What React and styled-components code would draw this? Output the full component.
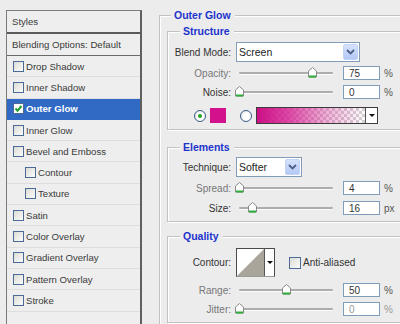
import React from "react";
import styled, { createGlobalStyle } from "styled-components";

const GlobalStyle = createGlobalStyle`
  html, body {
    margin: 0;
    padding: 0;
    background: #ececec;
    overflow: hidden;
  }
  body {
    font-family: "Liberation Sans", Arial, sans-serif;
    font-size: 10px;
    color: #333;
  }
  * { box-sizing: border-box; }
`;

const Window = styled.div`
  display: flex;
  width: 400px;
  height: 324px;
  overflow: hidden;
  background: #ececec;
`;

/* ---------- left list ---------- */

const StylesPanel = styled.div`
  flex: 0 0 136px;
  margin: 10px 0 0 6px;
  border: 1px solid #7c7c7c;
  border-right: 2px solid #5f5f5f;
  border-bottom: none;
  background: #eeeeee;
  display: flex;
  flex-direction: column;
  font-size: 9.6px;
`;

const PanelHead = styled.div`
  height: ${p => (p.$strong ? 23 : 22)}px;
  display: flex;
  align-items: center;
  padding-left: 5px;
  color: #3a3a3a;
  border-bottom: ${p => (p.$strong ? "2px solid #5a5a5a" : "1px solid #6a6a6a")};
`;

const StyleRow = styled.div`
  height: 21.3px;
  display: flex;
  align-items: center;
  gap: 2px;
  padding-left: ${p => (p.$indent ? 18 : 6)}px;
  border-bottom: 1px solid ${p => (p.$active ? "#316ac5" : "#dedede")};
  background: ${p => (p.$active ? "#316ac5" : "transparent")};
  color: ${p => (p.$active ? "#fff" : "#3a3a3a")};
  font-weight: ${p => (p.$active ? "bold" : "normal")};
`;

const Check = styled.span`
  width: ${p => p.$size || 11}px;
  height: ${p => p.$size || 11}px;
  flex: 0 0 auto;
  display: inline-flex;
  align-items: center;
  justify-content: center;
  border: 1px solid #4b6a96;
  background: ${p => (p.$on ? "#fff" : "linear-gradient(135deg, #dcdcd6, #fbfbfb)")};
`;

/* ---------- right side ---------- */

const SettingsPane = styled.div`
  flex: 1;
  min-width: 0;
  overflow: hidden;
  padding-left: 17px;
`;

const Group = styled.fieldset`
  width: ${p => p.$w}px;
  margin: ${p => p.$mt}px 0 0 0;
  padding: ${p => p.$pt}px 0 ${p => p.$pb}px ${p => p.$pl}px;
  border: 1px solid #c2c2c2;
  box-shadow: inset 1px 1px 0 #ffffff, 1px 1px 0 #ffffff;
  min-inline-size: 0;
`;

const Title = styled.legend`
  margin-left: ${p => p.$ml}px;
  padding: 0 4px 0 3px;
  line-height: 12px;
  font-weight: bold;
  font-size: 10.5px;
  color: #1c33cc;
  background: #ececec;
`;

const Row = styled.div`
  display: flex;
  align-items: center;
  height: ${p => p.$h}px;
  margin-top: ${p => p.$mt || 0}px;
`;

const Label = styled.span`
  width: 60px;
  margin-right: 5px;
  text-align: right;
  white-space: nowrap;
  color: ${p => (p.$dim ? "#777" : "#333")};
`;

const Select = styled.div`
  width: ${p => p.$w}px;
  height: 100%;
  display: flex;
  align-items: center;
  border: 1px solid #7f9db9;
  background: #fff;
  padding: 1px 1px 1px 2px;
  font-size: 10.5px;
  color: #222;
`;

const SelectText = styled.span`
  flex: 1;
`;

const SelectButton = styled.span`
  width: 15px;
  height: 100%;
  display: flex;
  align-items: center;
  justify-content: center;
  border-radius: 2px;
  background: linear-gradient(180deg, #d6e2fd, #b4c8f6);
  border: 1px solid #c2d3f8;
`;

const SliderBox = styled.div`
  position: relative;
  width: 100px;
  height: 100%;
  display: flex;
  align-items: center;
  padding: 0 3px;
  margin-right: 7px;
`;

const Track = styled.div`
  flex: 1;
  height: 2px;
  border-radius: 1px;
  background: #adadad;
  box-shadow: 0 1px 0 #fbfbfb;
`;

const Thumb = styled.svg`
  position: absolute;
  top: 1px;
`;

const NumberBox = styled.div`
  width: 37px;
  height: 100%;
  border: 1px solid #7f9db9;
  background: #fff;
  padding-left: 5px;
  display: flex;
  align-items: center;
  color: ${p => (p.$dim ? "#999" : "#333")};
`;

const Unit = styled.span`
  margin-left: 4px;
  color: ${p => (p.$dim ? "#999" : "#555")};
`;

const Radio = styled.span`
  position: relative;
  width: 12px;
  height: 12px;
  flex: 0 0 auto;
  margin-left: ${p => p.$ml}px;
  border-radius: 50%;
  border: 1px solid #365a89;
  background: radial-gradient(circle at 60% 60%, #ffffff 40%, #dcdcd8);
  &::after {
    content: "";
    display: ${p => (p.$on ? "block" : "none")};
    position: absolute;
    left: 3px;
    top: 3px;
    width: 4px;
    height: 4px;
    border-radius: 50%;
    background: #22a522;
  }
`;

const Swatch = styled.span`
  width: 16px;
  height: 15px;
  margin-left: 4px;
  background: #d3118c;
`;

const GradientPicker = styled.div`
  width: 122px;
  height: 100%;
  margin-left: 4px;
  display: flex;
  border: 1px solid #3c3c3c;
`;

const Ramp = styled.div`
  flex: 1;
  background:
    linear-gradient(90deg, #cc0f86 0%, rgba(214, 30, 145, 0.8) 30%, rgba(220, 60, 160, 0.4) 65%, rgba(230, 120, 190, 0) 100%),
    repeating-conic-gradient(#d2d2d2 0 25%, #ffffff 0 50%) 0 0 / 6px 6px;
`;

const DropBox = styled.div`
  width: ${p => p.$w}px;
  display: flex;
  align-items: center;
  justify-content: center;
  background: #fff;
  border-left: 1px solid #555;
`;

const Caret = styled.span`
  width: 0;
  height: 0;
  border-left: 3px solid transparent;
  border-right: 3px solid transparent;
  border-top: 3px solid #111;
`;

const ContourPicker = styled.div`
  width: 39px;
  height: 100%;
  display: flex;
  border: 1px solid #4a4a4a;
  border-bottom-color: #9a9a9a;
  background: #fff;
`;

const ContourCurve = styled.svg`
  flex: 1;
  height: 100%;
  display: block;
`;

const CheckLabel = styled.span`
  margin-left: 2px;
  color: #333;
`;

const lists = [
  { name: "Drop Shadow" },
  { name: "Inner Shadow" },
  { name: "Outer Glow", active: true },
  { name: "Inner Glow" },
  { name: "Bevel and Emboss" },
  { name: "Contour", indent: true },
  { name: "Texture", indent: true },
  { name: "Satin" },
  { name: "Color Overlay" },
  { name: "Gradient Overlay" },
  { name: "Pattern Overlay" },
  { name: "Stroke" },
];

const Chevron = () => (
  <svg width="9" height="6" viewBox="0 0 9 6">
    <polyline points="1,1 4.5,4.5 8,1" fill="none" stroke="#4d6185" strokeWidth="1.8" />
  </svg>
);

const Slider = ({ pos }) => (
  <SliderBox>
    <Track />
    <Thumb width="9" height="11" viewBox="0 0 9 11" style={{ left: 3 + pos * 94 - 4.5 }}>
      <path d="M0.5 10 V4 L4.5 0.5 L8.5 4 V10 Z" fill="#fdfdfd" stroke="#8a8a8a" />
      <rect x="1" y="8.5" width="7" height="2" fill="#2fae3a" />
    </Thumb>
  </SliderBox>
);

const SliderRow = ({ label, pos, value, unit, mt, dim, dimValue }) => (
  <Row $h={14} $mt={mt}>
    <Label $dim={dim}>{label}</Label>
    <Slider pos={pos} />
    <NumberBox $dim={dimValue}>{value}</NumberBox>
    <Unit $dim={dimValue}>{unit}</Unit>
  </Row>
);

export default function App() {
  return (
    <Window>
      <GlobalStyle />
      <StylesPanel>
        <PanelHead $strong>Styles</PanelHead>
        <PanelHead>Blending Options: Default</PanelHead>
        {lists.map(item => (
          <StyleRow key={item.name} $active={item.active} $indent={item.indent}>
            <Check $on={item.active}>
              {item.active && (
                <svg width="9" height="9" viewBox="0 0 9 9">
                  <polyline points="1.5,4.5 3.5,6.8 7.5,2" fill="none" stroke="#1f9e2a" strokeWidth="2" />
                </svg>
              )}
            </Check>
            {item.name}
          </StyleRow>
        ))}
      </StylesPanel>

      <SettingsPane>
        <Group $w={300} $mt={9} $pt={4} $pb={20} $pl={7}>
          <Title $ml={4}>Outer Glow</Title>

          <Group $w={292} $mt={0} $pt={5} $pb={5} $pl={3}>
            <Title $ml={9}>Structure</Title>
            <Row $h={20}>
              <Label>Blend Mode:</Label>
              <Select $w={124}>
                <SelectText>Screen</SelectText>
                <SelectButton><Chevron /></SelectButton>
              </Select>
            </Row>
            <SliderRow label="Opacity:" pos={0.78} value="75" unit="%" mt={4} dim />
            <SliderRow label="Noise:" pos={0.01} value="0" unit="%" mt={5} />
            <Row $h={17} $mt={8}>
              <Radio $ml={23} $on />
              <Swatch />
              <Radio $ml={14} />
              <GradientPicker>
                <Ramp />
                <DropBox $w={12}><Caret /></DropBox>
              </GradientPicker>
            </Row>
          </Group>

          <Group $w={292} $mt={11} $pt={4} $pb={6} $pl={3}>
            <Title $ml={9}>Elements</Title>
            <Row $h={20}>
              <Label>Technique:</Label>
              <Select $w={66}>
                <SelectText>Softer</SelectText>
                <SelectButton><Chevron /></SelectButton>
              </Select>
            </Row>
            <SliderRow label="Spread:" pos={0.01} value="4" unit="%" mt={4} dim />
            <SliderRow label="Size:" pos={0.14} value="16" unit="px" mt={6} />
          </Group>

          <Group $w={292} $mt={8} $pt={6} $pb={6} $pl={3}>
            <Title $ml={9}>Quality</Title>
            <Row $h={29}>
              <Label>Contour:</Label>
              <ContourPicker>
                <ContourCurve viewBox="0 0 28 27" preserveAspectRatio="none">
                  <polygon points="0,27 28,0 28,27" fill="#aaa59a" />
                </ContourCurve>
                <DropBox $w={10}><Caret /></DropBox>
              </ContourPicker>
              <Check $size={12} style={{ marginLeft: 14 }} />
              <CheckLabel>Anti-aliased</CheckLabel>
            </Row>
            <SliderRow label="Range:" pos={0.51} value="50" unit="%" mt={6} dim />
            <SliderRow label="Jitter:" pos={0.01} value="0" unit="%" mt={5} dim dimValue />
          </Group>
        </Group>
      </SettingsPane>
    </Window>
  );
}
